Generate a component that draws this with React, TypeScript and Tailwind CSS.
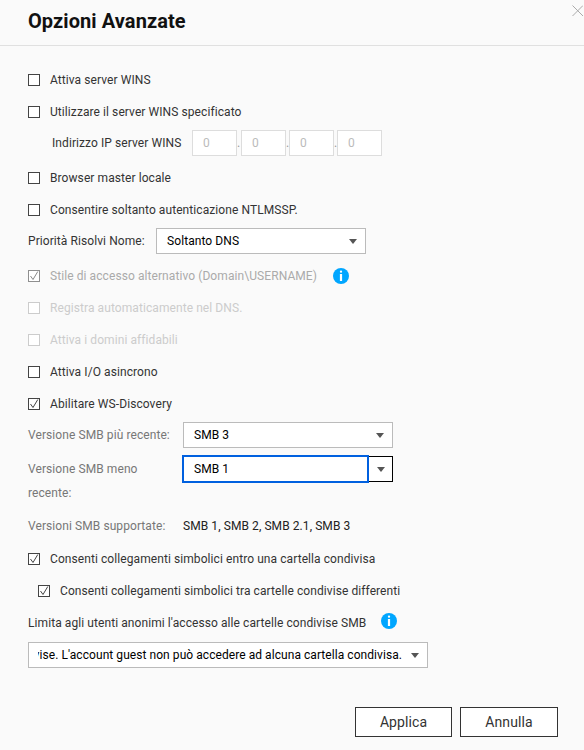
import React from 'react';

type CheckProps = {
  label: string;
  checked?: boolean;
  tone?: 'normal' | 'muted' | 'off';
  indent?: boolean;
  info?: boolean;
};

const InfoIcon = ({ className }: { className: string }) => (
  <svg className={className} width="16" height="16" viewBox="0 0 16 16">
    <circle cx="8" cy="8" r="8" fill="#00a6ff" />
    <rect x="6.9" y="2.6" width="2.2" height="2.2" rx="1" fill="#fff" />
    <rect x="6.9" y="6" width="2.2" height="7" fill="#fff" />
  </svg>
);

const Arrow = ({ className = '' }: { className?: string }) => (
  <svg className={className} width="8" height="5" viewBox="0 0 8 5">
    <path d="M0 0H8L4 5Z" fill="#555" />
  </svg>
);

const CheckRow = ({ label, checked, tone = 'normal', indent, info }: CheckProps) => {
  const box =
    tone === 'normal' ? 'border-[#444]' : tone === 'muted' ? 'border-[#8f8f8f]' : 'border-[#ccc]';
  const text =
    tone === 'normal' ? 'text-[#333]' : tone === 'muted' ? 'text-[#aaa]' : 'text-[#ccc]';
  return (
    <div className={`flex h-8 items-center ${indent ? 'pl-[10px]' : ''}`}>
      <span className={`relative h-3 w-3 shrink-0 border bg-white ${box}`}>
        {checked && (
          <svg className="absolute left-0 top-0" width="10" height="10" viewBox="0 0 10 10">
            <path d="M1.5 5L4 8.5L8.8 0.5" fill="none" stroke={tone === 'muted' ? '#888' : '#444'} strokeWidth="1" />
          </svg>
        )}
      </span>
      <span className={`ml-[10px] text-xs ${text}`}>{label}</span>
      {info && <InfoIcon className="ml-4" />}
    </div>
  );
};

const Select = ({ value, className }: { value: string; className: string }) => (
  <div className={`flex h-[26px] items-center justify-between border border-[#bbb] bg-white pl-[10px] pr-2 text-xs text-black ${className}`}>
    <span>{value}</span>
    <Arrow />
  </div>
);

const IpField = () => (
  <div className="flex h-[26px] w-[45px] items-center border border-[#ddd] bg-white pl-[10px] text-xs text-[#bbb]">0</div>
);

export default function App() {
  return (
    <div className="relative h-[750px] w-[584px] overflow-hidden bg-[#fafafa] font-['Roboto',sans-serif] tracking-[0.08px]">
      <header className="flex h-[46px] items-center border-b border-[#e0e0e0] pl-7 pb-[3px]">
        <h1 className="text-xl font-bold text-[#111]">Opzioni Avanzate</h1>
      </header>
      <svg className="absolute right-px top-[5px]" width="11" height="11" viewBox="0 0 11 11">
        <path d="M0.5 0.5L11 11M11 0.5L0.5 11" stroke="#aaa" strokeWidth="1" fill="none" />
      </svg>

      <main className="pl-7 pt-[18px]">
        <CheckRow label="Attiva server WINS" />
        <CheckRow label="Utilizzare il server WINS specificato" />
        <div className="ml-6 mt-[2px] flex items-center text-xs text-[#333]">
          <span className="w-[140px]">Indirizzo IP server WINS</span>
          <IpField />
          <span className="w-1 text-[#999]">.</span>
          <IpField />
          <span className="w-[3px] text-[#999]">.</span>
          <IpField />
          <span className="w-[3px] text-[#999]">.</span>
          <IpField />
        </div>
        <div className="mt-[6px]">
          <CheckRow label="Browser master locale" />
          <CheckRow label="Consentire soltanto autenticazione NTLMSSP." />
        </div>
        <div className="mt-[2px] flex items-center text-xs text-[#333]">
          <span className="w-[128px]">Priorità Risolvi Nome:</span>
          <Select value="Soltanto DNS" className="w-[210px]" />
        </div>
        <div className="mt-[6px]">
          <CheckRow label="Stile di accesso alternativo (Domain\USERNAME)" checked tone="muted" info />
          <CheckRow label="Registra automaticamente nel DNS." tone="off" />
          <CheckRow label="Attiva i domini affidabili" tone="off" />
          <CheckRow label="Attiva I/O asincrono" />
          <CheckRow label="Abilitare WS-Discovery" checked />
        </div>
        <div className="mt-[2px] flex items-center text-xs text-[#777]">
          <span className="w-[155px]">Versione SMB più recente:</span>
          <Select value="SMB 3" className="w-[210px]" />
        </div>
        <div className="mt-[7px] flex items-start text-xs text-[#777]">
          <span className="w-[154px] pt-[2px] leading-6">Versione SMB meno<br />recente:</span>
          <div className="flex items-center text-black">
            <div className="flex h-7 w-[187px] items-center border-2 border-[#0060df] bg-white pl-[10px]">SMB 1</div>
            <div className="flex h-[26px] w-6 items-center justify-center border border-l-0 border-black bg-white">
              <Arrow />
            </div>
          </div>
        </div>
        <div className="mt-3 flex h-[18px] items-center text-xs text-[#777]">
          <span className="w-[155px]">Versioni SMB supportate:</span>
          <span className="text-[#222]">SMB 1, SMB 2, SMB 2.1, SMB 3</span>
        </div>
        <div className="mt-2">
          <CheckRow label="Consenti collegamenti simbolici entro una cartella condivisa" checked />
          <CheckRow label="Consenti collegamenti simbolici tra cartelle condivise differenti" checked indent />
        </div>
        <div className="flex h-8 items-center text-xs text-[#333]">
          <span>Limita agli utenti anonimi l'accesso alle cartelle condivise SMB</span>
          <InfoIcon className="mb-1 ml-[15px]" />
        </div>
        <div className="mt-[3px] flex h-[26px] w-[400px] items-center border border-[#bbb] bg-white pr-2 text-xs text-black">
          <div className="ml-[9px] flex min-w-0 flex-1 justify-end overflow-hidden whitespace-nowrap">
            <span className="tracking-[0.06px]">Nega l'accesso alle cartelle condivise. L'account guest non può accedere ad alcuna cartella condivisa.</span>
          </div>
          <Arrow className="ml-[9px] shrink-0" />
        </div>
      </main>

      <footer className="mt-[39px] flex justify-end gap-2 pr-[26px]">
        <button className="h-[30px] w-[97px] border border-[#333] bg-white text-sm text-[#333]">Applica</button>
        <button className="h-[30px] w-[98px] border border-[#333] bg-white text-sm text-[#333]">Annulla</button>
      </footer>
    </div>
  );
}
